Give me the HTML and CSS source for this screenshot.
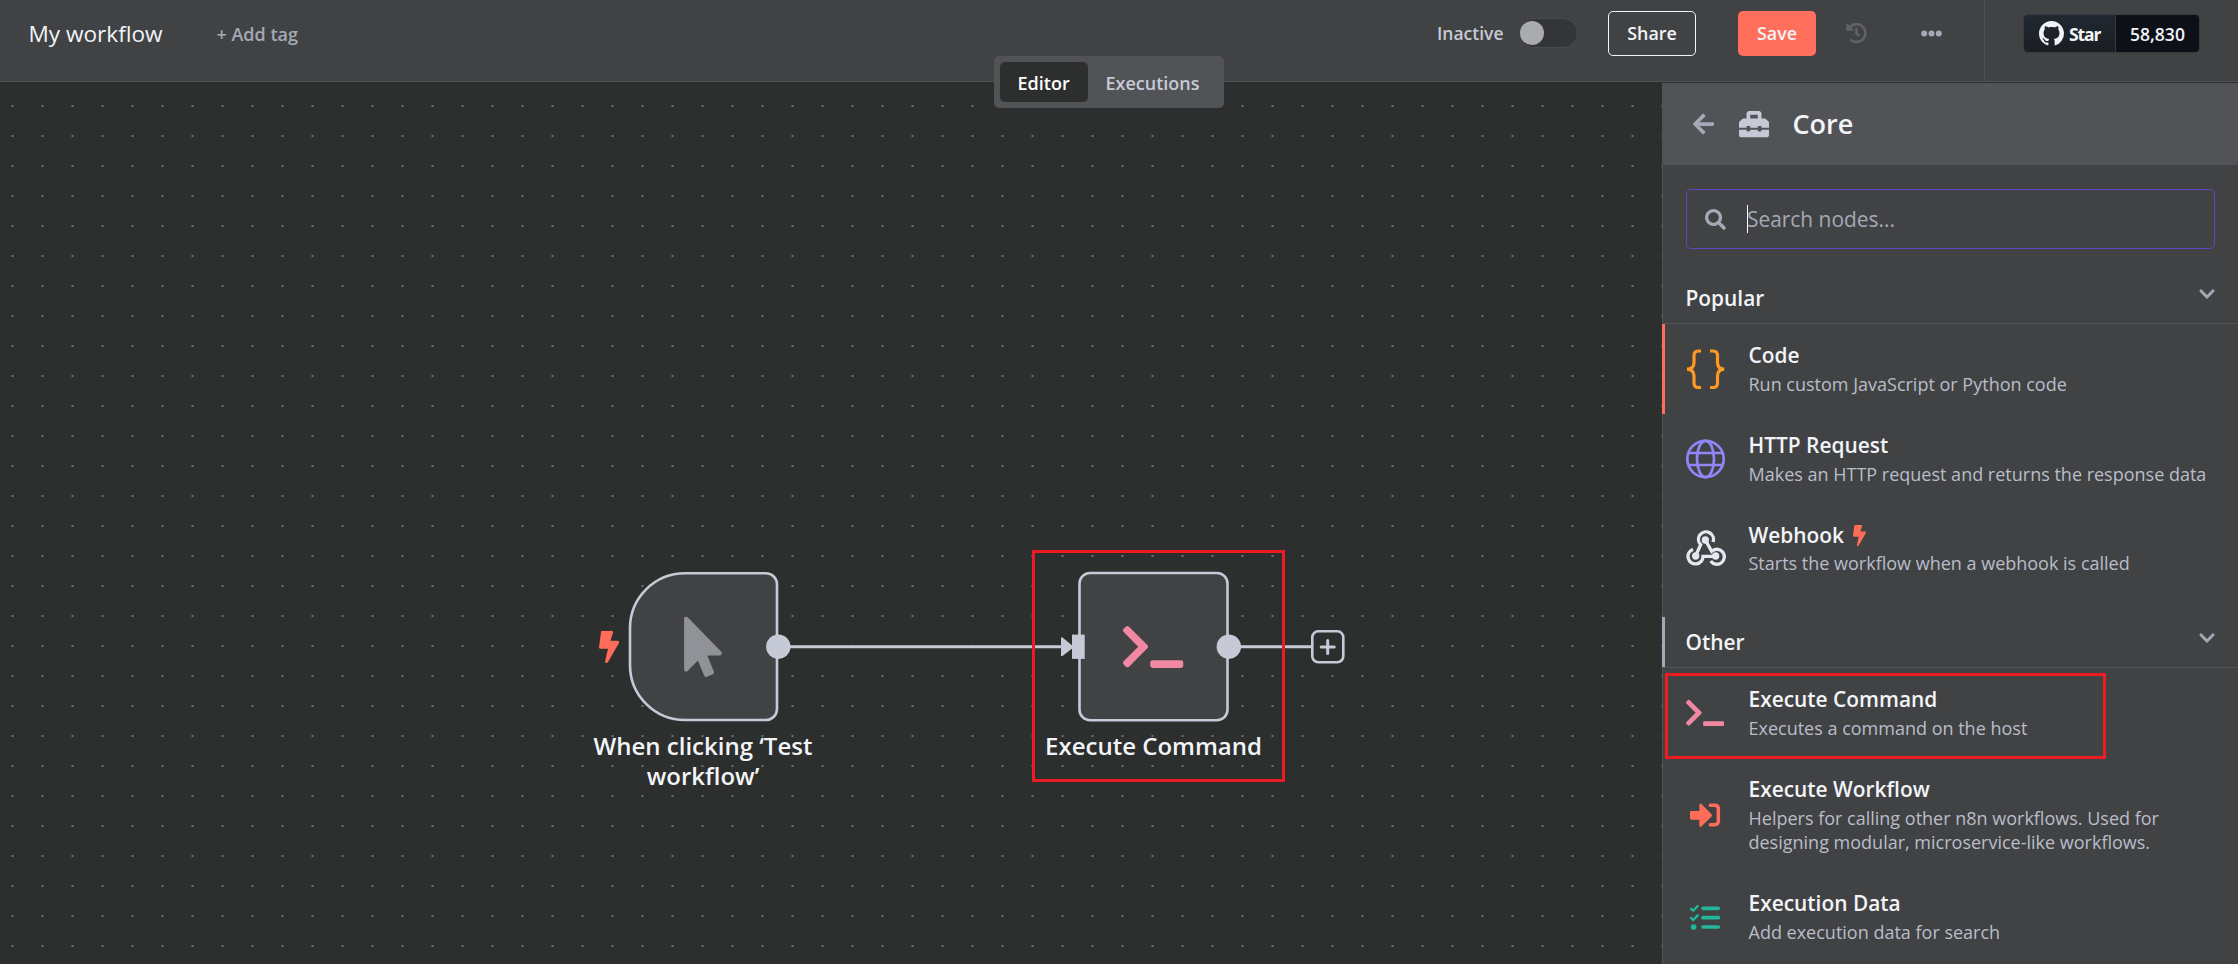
FILE: index.html
```html
<!DOCTYPE html>
<html lang="en">
<head>
<meta charset="utf-8">
<title>My workflow</title>
<link rel="stylesheet" href="styles.css">
</head>
<body>
<svg class="defs" aria-hidden="true">
  <symbol id="bolt" viewBox="0 0 320 512"><path d="M296 160H180.6l42.6-129.8C227.2 15 215.7 0 200 0H56C44 0 33.8 8.9 32.2 20.8l-32 240C-1.7 275.2 9.5 288 24 288h118.7L96.6 482.5c-3.6 15.2 8 29.5 23.3 29.5 8.4 0 16.4-4.4 20.8-12l176-304c9.3-15.9-2.2-36-20.7-36z"/></symbol>
  <symbol id="terminal" viewBox="0 0 640 512"><path d="M257.981 272.971L63.638 467.314c-9.373 9.373-24.569 9.373-33.941 0L7.029 444.647c-9.357-9.357-9.375-24.522-.04-33.901L161.011 256 6.99 101.255c-9.335-9.379-9.317-24.544.04-33.901l22.667-22.667c9.373-9.373 24.569-9.373 33.941 0L257.981 239.03c9.373 9.372 9.373 24.568 0 33.941zM640 456v-32c0-13.255-10.745-24-24-24H312c-13.255 0-24 10.745-24 24v32c0 13.255 10.745 24 24 24h304c13.255 0 24-10.745 24-24z"/></symbol>
  <symbol id="chevron" viewBox="0 0 448 512"><path d="M207.029 381.476L12.686 187.132c-9.373-9.373-9.373-24.569 0-33.941l22.667-22.667c9.357-9.357 24.522-9.375 33.901-.04L224 284.505l154.745-154.021c9.379-9.335 24.544-9.317 33.901.04l22.667 22.667c9.373 9.373 9.373 24.569 0 33.941L240.971 381.476c-9.373 9.372-24.569 9.372-33.942 0z"/></symbol>
</svg>

<header class="topbar">
  <div class="title-area">
    <span class="workflow-name">My workflow</span>
    <span class="add-tag">+ Add tag</span>
  </div>
  <div class="actions">
    <span class="status">Inactive</span>
    <span class="toggle"><span class="knob"></span></span>
    <button class="btn share">Share</button>
    <button class="btn save">Save</button>
    <svg class="history" viewBox="0 0 512 512"><path d="M504 255.531c.253 136.64-111.18 248.372-247.82 248.468-59.015.042-113.223-20.53-155.822-54.911-11.077-8.94-11.905-25.541-1.839-35.607l11.267-11.267c8.609-8.609 22.353-9.551 31.891-1.984C173.062 425.135 212.781 440 256 440c101.705 0 184-82.311 184-184 0-101.705-82.311-184-184-184-48.814 0-93.149 18.969-126.068 49.932l50.754 50.754c10.08 10.08 2.941 27.314-11.313 27.314H24c-8.837 0-16-7.163-16-16V38.627c0-14.254 17.234-21.393 27.314-11.314l49.372 49.372C129.209 34.136 189.552 8 256 8c136.81 0 247.747 110.78 248 247.531zm-180.912 78.784l9.823-12.63c8.138-10.463 6.253-25.542-4.21-33.679L288 256.349V152c0-13.255-10.745-24-24-24h-16c-13.255 0-24 10.745-24 24v135.651l65.409 50.874c10.463 8.137 25.541 6.253 33.679-4.21z"/></svg>
    <svg class="more" viewBox="0 0 21 7"><circle cx="3.2" cy="3.5" r="3"/><circle cx="10.5" cy="3.5" r="3"/><circle cx="17.8" cy="3.5" r="3"/></svg>
  </div>
  <div class="github">
    <span class="gh-star"><svg viewBox="0 0 16 16"><path d="M8 0C3.58 0 0 3.58 0 8c0 3.54 2.29 6.53 5.47 7.59.4.07.55-.17.55-.38 0-.19-.01-.82-.01-1.49-2.01.37-2.53-.49-2.69-.94-.09-.23-.48-.94-.82-1.13-.28-.15-.68-.52-.01-.53.63-.01 1.08.58 1.23.82.72 1.21 1.87.87 2.33.66.07-.52.28-.87.51-1.07-1.78-.2-3.64-.89-3.64-3.95 0-.87.31-1.59.82-2.15-.08-.2-.36-1.02.08-2.12 0 0 .67-.21 2.2.82.64-.18 1.32-.27 2-.27.68 0 1.36.09 2 .27 1.53-1.04 2.2-.82 2.2-.82.44 1.1.16 1.92.08 2.12.51.56.82 1.27.82 2.15 0 3.07-1.87 3.75-3.65 3.95.29.25.54.73.54 1.48 0 1.07-.01 1.93-.01 2.2 0 .21.15.46.55.38A8.013 8.013 0 0016 8c0-4.42-3.58-8-8-8z"/></svg><span class="star-text">Star</span></span><span class="gh-count">58,830</span>
  </div>
  <nav class="tabs"><span class="tab active">Editor</span><span class="tab">Executions</span></nav>
</header>

<main class="main">
  <section class="canvas">
    <svg class="grid" width="100%" height="100%">
      <defs><pattern id="dots" width="30" height="30" patternUnits="userSpaceOnUse" x="-2.5" y="9"><circle cx="15" cy="15" r="1" fill="#858787"/></pattern></defs>
      <rect width="100%" height="100%" fill="url(#dots)"/>
    </svg>
    <svg class="links" width="1662" height="882" viewBox="0 82 1662 882">
      <path class="wire" d="M778 646.700H1062M1229 646.700H1311"/>
      <path class="node-box" d="M685 573.3H766a11 11 0 0 1 11 11V709a11 11 0 0 1-11 11H685a55 55 0 0 1-55-55V628.300a55 55 0 0 1 55-55z"/>
      <rect class="node-box" x="1079.500" y="573" width="148" height="147.2" rx="10.500"/>
      <circle class="solid" cx="778.300" cy="646.700" r="12.200"/>
      <circle class="solid" cx="1228.800" cy="646.700" r="12.200"/>
      <rect class="solid" x="1072" y="634.600" width="12.700" height="24.300"/>
      <path class="solid" d="M1061 637.500h1.500L1074 647 1062.500 656h-1.500z"/>
      <rect class="plus" x="1312.300" y="631.300" width="31" height="31" rx="6"/>
      <path class="plus thick" d="M1327.700 640.500v13M1321.200 647h13"/>
      <svg x="684" y="616.500" width="38" height="60.500" viewBox="0 0 320 512"><path class="pointer" d="M302.189 329.126H196.105l55.831 135.993c3.889 9.428-.555 19.999-9.444 23.999l-49.165 21.427c-9.165 4-19.443-.571-23.332-9.714l-53.053-129.136-86.664 89.138C18.729 472.71 0 463.554 0 447.977V18.299C0 1.899 19.921-6.096 30.277 5.443l284.412 292.542c11.472 11.179 3.007 31.141-12.5 31.141z"/></svg>
      <use href="#bolt" class="coral" x="599" y="630.700" width="20.200" height="32.300"/>
      <use href="#terminal" class="pink" x="1123" y="622.500" width="60.500" height="48.400"/>
    </svg>
    <div class="node-label label-trigger">When clicking ‘Test workflow’</div>
    <div class="node-label label-command">Execute Command</div>
    <div class="mark mark-node"></div>
  </section>

  <aside class="panel">
    <div class="panel-head">
      <svg class="back" viewBox="0 0 448 512"><path d="M257.5 445.1l-22.2 22.2c-9.4 9.4-24.6 9.4-33.9 0L7 273c-9.4-9.4-9.4-24.6 0-33.9L201.4 44.7c9.4-9.4 24.6-9.4 33.9 0l22.2 22.2c9.5 9.5 9.3 25-.4 34.3L136.6 216H424c13.3 0 24 10.7 24 24v32c0 13.3-10.7 24-24 24H136.6l120.5 114.800c9.8 9.3 10 24.8.4 34.3z"/></svg>
      <svg class="toolbox" viewBox="0 0 512 512"><path d="M502.63 214.63l-45.25-45.25c-6-6-14.14-9.37-22.63-9.37H384V80c0-26.51-21.49-48-48-48H176c-26.51 0-48 21.49-48 48v80H77.25c-8.49 0-16.62 3.37-22.63 9.37L9.37 214.63c-6 6-9.37 14.14-9.37 22.63V320h128v-16c0-8.84 7.16-16 16-16h32c8.84 0 16 7.16 16 16v16h128v-16c0-8.84 7.16-16 16-16h32c8.84 0 16 7.16 16 16v16h128v-82.75c0-8.48-3.37-16.62-9.37-22.62zM320 160H192V96h128v64zm64 208c0 8.84-7.16 16-16 16h-32c-8.84 0-16-7.16-16-16v-16H192v16c0 8.84-7.16 16-16 16h-32c-8.84 0-16-7.16-16-16v-16H0v96c0 17.67 14.33 32 32 32h448c17.67 0 32-14.33 32-32v-96H384v16z"/></svg>
      <span class="panel-title">Core</span>
    </div>
    <div class="search">
      <svg viewBox="0 0 512 512"><path d="M505 442.7L405.3 343c-4.5-4.5-10.600-7-17-7H372c27.6-35.3 44-79.7 44-128C416 93.1 322.9 0 208 0S0 93.1 0 208s93.1 208 208 208c48.3 0 92.7-16.4 128-44v16.3c0 6.4 2.5 12.5 7 17l99.7 99.7c9.4 9.4 24.6 9.4 33.9 0l28.3-28.3c9.4-9.4 9.4-24.6.1-34zM208 336c-70.7 0-128-57.2-128-128 0-70.7 57.2-128 128-128 70.7 0 128 57.2 128 128 0 70.7-57.2 128-128 128z"/></svg>
      <span class="caret"></span><span class="placeholder">Search nodes...</span>
    </div>

    <div class="category popular"><span>Popular</span><svg><use href="#chevron"/></svg></div>
    <div class="item current">
      <svg class="ico" viewBox="0 0 40 40"><g fill="none" stroke="#ff9922" stroke-width="3.200"><path d="M15 2H12.500Q8 2 8 6.500V13.500Q8 20 1 20.200Q8 20.500 8 27V34Q8 38.500 12.500 38.500H15M24 2H27Q31.500 2 31.500 6.500V13.500Q31.500 20 38.200 20.200Q31.500 20.500 31.500 27V34Q31.500 38.500 27 38.500H24"/></g></svg>
      <div class="copy"><div class="name">Code</div><div class="desc">Run custom JavaScript or Python code</div></div>
    </div>
    <div class="item http">
      <svg class="ico" viewBox="0 0 40 40"><g fill="none" stroke="#8f87f7" stroke-width="2.700"><circle cx="19.500" cy="20" r="18.200"/><ellipse cx="19.500" cy="20" rx="8.500" ry="18.200"/><path d="M2.500 14H36.500M2.500 26H36.500"/></g></svg>
      <div class="copy"><div class="name">HTTP Request</div><div class="desc">Makes an HTTP request and returns the response data</div></div>
    </div>
    <div class="item webhook">
      <svg class="ico" viewBox="0 0 120 120"><g fill="none" stroke="#e4e8f0" stroke-width="10"><path d="M81 42A22.500 22.500 0 1 0 44 50L31 79M58 36L77 70A22.500 22.500 0 1 1 74 99M21 64A22.500 22.500 0 1 0 51 85H88"/></g><g fill="#e4e8f0"><circle cx="58" cy="36" r="11"/><circle cx="29" cy="84" r="11"/><circle cx="89" cy="84" r="11"/></g></svg>
      <div class="copy"><div class="name">Webhook<svg class="mini-bolt"><use href="#bolt"/></svg></div><div class="desc">Starts the workflow when a webhook is called</div></div>
    </div>

    <div class="category other"><span>Other</span><svg><use href="#chevron"/></svg></div>
    <div class="item command">
      <svg class="ico pink"><use href="#terminal" x="0" y="4.500" width="38" height="30.500"/></svg>
      <div class="copy"><div class="name">Execute Command</div><div class="desc">Executes a command on the host</div></div>
      <div class="mark mark-item"></div>
    </div>
    <div class="item tall">
      <svg class="ico" viewBox="0 0 120 120"><path fill="#ff6d5a" d="M16 48H40V31Q40 22 47 28L76 57Q80 61 76 65L47 94Q40 99 40 91V74H16Q12 74 12 70V52Q12 48 16 48z"/><path fill="none" stroke="#ff6d5a" stroke-width="10.500" stroke-linecap="round" d="M73 31H86Q97 31 97 42V78Q97 89 86 89H73"/></svg>
      <div class="copy"><div class="name">Execute Workflow</div><div class="desc">Helpers for calling other n8n workflows. Used for designing modular, microservice-like workflows.</div></div>
    </div>
    <div class="item data">
      <svg class="ico" viewBox="0 0 120 120"><g fill="none" stroke="#22b69a"><path stroke-width="11" stroke-linecap="round" d="M51 34H97M51 62H97M51 90H97"/><path stroke-width="7" stroke-linecap="round" stroke-linejoin="round" d="M15 35L22 41L35 27M15 63L22 69L35 55"/></g><circle cx="23" cy="90" r="8.500" fill="#22b69a"/></svg>
      <div class="copy"><div class="name">Execution Data</div><div class="desc">Add execution data for search</div></div>
    </div>
  </aside>
</main>
</body>
</html>
```
FILE: styles.css
```css
* { box-sizing: border-box; }
body {
  margin: 0;
  width: 2238px;
  height: 964px;
  overflow: hidden;
  background: #2d2e2e;
  font-family: "Open Sans", "Noto Sans", sans-serif;
  font-size: 17.5px;
  color: #f2f4f8;
}
svg { display: block; flex: none; }
.defs { position: absolute; width: 0; height: 0; }

.topbar {
  position: relative;
  display: flex;
  height: 82px;
  background: #414244;
  border-bottom: 1px solid #525356;
}
.title-area { display: flex; flex: 1; height: 67px; align-items: center; padding-left: 28.500px; }
.workflow-name { width: 188px; font-size: 22.6px; }
.add-tag { color: #a5a9b5; font-size: 18px; font-weight: 600; }
.actions { display: flex; align-items: center; height: 66px; }
.status { width: 82px; font-weight: 600; color: #c6cad7; }
.toggle {
  width: 59px;
  height: 30px;
  margin-right: 30px;
  padding: 2px 0;
  border: 1px solid #4a4b4e;
  border-radius: 15px;
  background: #343537;
}
.knob { display: block; width: 24px; height: 24px; border-radius: 50%; background: #aaabae; }
.btn {
  height: 45px;
  padding: 0;
  border-radius: 5px;
  font: 600 17.9px "Open Sans", sans-serif;
  color: #f2f4f8;
}
.share { width: 88px; border: 1.500px solid #f2f4f8; background: none; margin-right: 42px; }
.save { width: 78px; border: 0; background: #ff6f5c; margin-right: 30px; }
.history { width: 21px; height: 26px; fill: #5f6165; margin-right: 54px; }
.more { width: 21px; height: 7px; fill: #a5a9b5; margin-right: 42px; }
.github { display: flex; width: 254px; height: 81px; padding: 14px 0 0 38px; border-left: 1px solid #525356; }
.gh-star, .gh-count { display: flex; height: 39px; align-items: center; font-weight: 600; border: 1px solid #363b42; }
.gh-star { width: 93px; padding-left: 15px; gap: 5px; border-radius: 5px 0 0 5px; background: linear-gradient(#212830, #1a1e23); font-weight: 700; }
.gh-star svg { width: 25px; height: 25px; fill: #f0f3f8; }
.star-text { letter-spacing: -1.1px; }
.gh-count { width: 84px; justify-content: center; border-left: 0; border-radius: 0 5px 5px 0; background: #0d1117; }
.tabs {
  position: absolute;
  z-index: 2;
  left: 994px;
  top: 56px;
  display: flex;
  width: 230px;
  height: 51.500px;
  padding: 6px;
  border-radius: 5px;
  background: #525356;
}
.tab { height: 39.500px; padding: 0 17.500px; line-height: 42px; border-radius: 5px; font-size: 18px; font-weight: 600; color: #c6cad7; }
.tab.active { width: 88px; background: #2d2e2e; color: #fff; }

.main { display: flex; height: 882px; }
.canvas { position: relative; width: 1662px; height: 882px; }
.grid, .links { position: absolute; left: 0; top: 0; }
.wire { stroke: #c6cad7; stroke-width: 3; }
.node-box { fill: #414244; stroke: #c6cad7; stroke-width: 2.600; }
.solid { fill: #c6cad7; }
.plus { fill: #2d2e2e; stroke: #c6cad7; stroke-width: 2.600; }
.plus.thick { stroke-width: 3; stroke-linecap: round; }
.pointer { fill: #909298; }
.coral { fill: #ff6d5a; }
.pink { fill: #f188a2; }
.node-label { position: absolute; width: 250px; text-align: center; font-size: 24px; font-weight: 600; line-height: 30px; }
.label-trigger { left: 578px; top: 649px; }
.label-command { left: 1028.500px; top: 649px; }
.mark { position: absolute; border: 3px solid #ed1c24; }
.mark-node { left: 1032px; top: 468px; width: 253px; height: 232px; }
.mark-item { left: 3px; top: 5px; width: 441px; height: 86px; }

.panel { width: 576px; height: 881px; margin-top: 1px; background: #414244; box-shadow: inset 1px 0 #525356; overflow: hidden; }
.panel-head { display: flex; align-items: center; height: 82px; padding-left: 31px; background: #525356; }
.back { width: 21px; height: 24px; fill: #a5a9b5; margin-right: 25px; }
.toolbox { width: 30px; height: 30px; fill: #c6cad7; margin: -1px 23.500px 0 0; }
.panel-title { font-size: 27px; font-weight: 600; margin-top: -2px; }
.search {
  display: flex;
  align-items: center;
  width: 529px;
  height: 60px;
  margin: 24px 0 0 24px;
  padding-left: 18px;
  border: 1px solid #5c48c0;
  border-radius: 5px;
  font-size: 20.9px;
  color: #a5a9b5;
}
.search svg { width: 21px; height: 21px; fill: #a5a9b5; margin-right: 21px; }
.caret { width: 1px; height: 28px; margin-right: -1px; background: #fff; }
.category { display: flex; justify-content: space-between; padding: 0 23px 0 23.500px; border-bottom: 1px solid #525356; font-size: 20.9px; font-weight: 600; }
.category span { line-height: 27px; }
.category svg { width: 16px; height: 18px; fill: #a5a9b5; }
.popular { height: 50px; margin-top: 25px; padding-top: 11px; }
.other { height: 51px; margin-top: 24px; padding-top: 12px; box-shadow: inset 3px 0 #a5a9b5; }
.item { position: relative; display: flex; align-items: center; height: 90px; padding: 0 24px; }
.item.current { box-shadow: inset 3px 0 #ff6d5a; }
.item.webhook, .item.http { height: 89.500px; }
.item.tall { height: 114px; }
.ico { width: 40px; height: 40px; margin-right: 22.500px; }
.copy { width: 470px; flex: none; }
.tall .copy { width: 445px; }
.name { display: flex; align-items: center; font-size: 20.9px; font-weight: 600; line-height: 27px; }
.desc { color: #b9bdc9; font-size: 18px; line-height: 24px; margin-top: 2.500px; }
.mini-bolt { width: 13px; height: 21px; fill: #ff6d5a; margin-left: 9px; }
```
